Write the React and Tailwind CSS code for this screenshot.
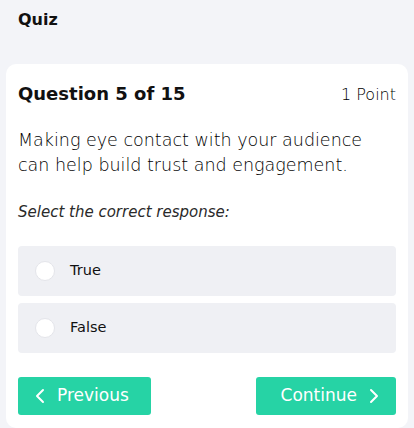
import React, { useState } from 'react';
import { ChevronLeft, ChevronRight } from 'lucide-react';

const font = { fontFamily: "'DejaVu Sans', 'Open Sans', sans-serif" };

const App = () => {
  const [answer, setAnswer] = useState('');

  const options = ['True', 'False'];

  return (
    <div className="min-h-[428px] bg-[#f3f4f8] text-[#111111] overflow-hidden" style={font}>
      {/* Header */}
      <div className="px-[18px] pt-[7px] h-[64px]">
        <h1 className="text-[16px] font-bold leading-[26px]">Quiz</h1>
      </div>

      {/* Card */}
      <div className="mx-[6px] bg-white rounded-[10px] px-[12px] pt-[15px] pb-[13px] min-h-[363px]">
        <div className="flex justify-between items-baseline">
          <h2 className="text-[18px] font-bold leading-[30px]">Question 5 of 15</h2>
          <span className="text-[16px] font-extralight text-black">1 Point</span>
        </div>

        <p className="mt-[19px] max-w-[365px] text-[17.5px] font-extralight text-black leading-[25px]">
          Making eye contact with your audience can help build trust and engagement.
        </p>

        <p className="mt-[23px] text-[15px] italic text-[#2a2a2a] leading-[22px]">
          Select the correct response:
        </p>

        {/* Options */}
        <div className="mt-[23px] flex flex-col gap-[7px]">
          {options.map((opt) => (
            <button
              key={opt}
              onClick={() => setAnswer(opt)}
              className="flex items-center h-[50px] bg-[#eff0f4] rounded-[4px] pl-[17px] text-left"
            >
              <span className="w-[20px] h-[20px] rounded-full bg-white border border-[#e4e5ea] flex items-center justify-center">
                {answer === opt && <span className="w-[10px] h-[10px] rounded-full bg-[#26d3a5]"></span>}
              </span>
              <span className="ml-[15px] text-[14.5px]">{opt}</span>
            </button>
          ))}
        </div>

        {/* Navigation */}
        <div className="mt-[24px] flex justify-between">
          <button className="flex items-center h-[38px] w-[133px] bg-[#26d3a5] rounded-[3px] text-white text-[17px] pl-[10px]">
            <ChevronLeft size={24} strokeWidth={2} />
            <span className="ml-[5px]">Previous</span>
          </button>
          <button className="flex items-center justify-end h-[38px] w-[140px] bg-[#26d3a5] rounded-[3px] text-white text-[17px] pr-[10px]">
            <span className="mr-[5px]">Continue</span>
            <ChevronRight size={24} strokeWidth={2} />
          </button>
        </div>
      </div>
    </div>
  );
};

export default App;
